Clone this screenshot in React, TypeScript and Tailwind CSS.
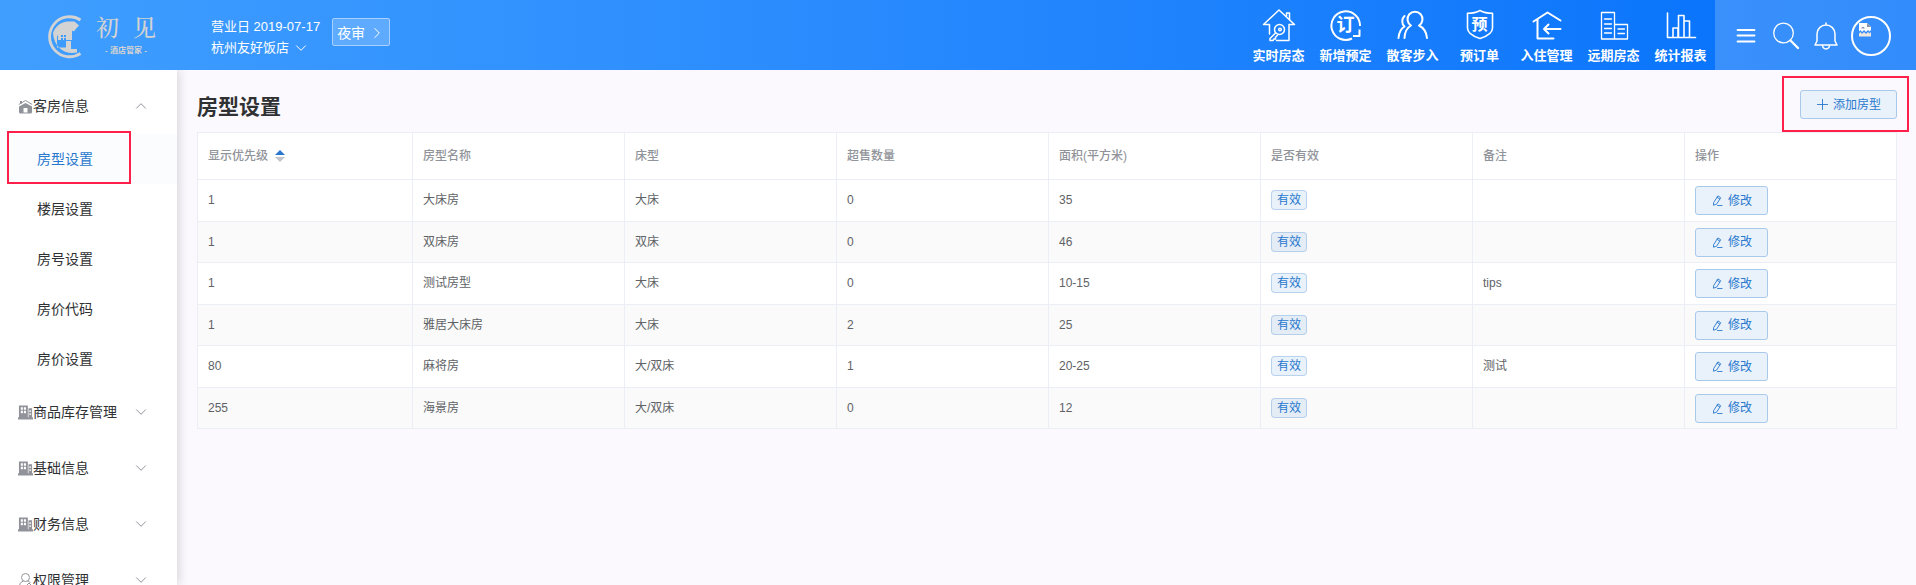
import type { ReactNode } from 'react';

type Room = { order: string; name: string; bed: string; oversell: string; area: string; note: string };

const rooms: Room[] = [
  { order: '1', name: '大床房', bed: '大床', oversell: '0', area: '35', note: '' },
  { order: '1', name: '双床房', bed: '双床', oversell: '0', area: '46', note: '' },
  { order: '1', name: '测试房型', bed: '大床', oversell: '0', area: '10-15', note: 'tips' },
  { order: '1', name: '雅居大床房', bed: '大床', oversell: '2', area: '25', note: '' },
  { order: '80', name: '麻将房', bed: '大/双床', oversell: '1', area: '20-25', note: '测试' },
  { order: '255', name: '海景房', bed: '大/双床', oversell: '0', area: '12', note: '' },
];

const stroke = {
  fill: 'none',
  stroke: 'currentColor',
  strokeLinecap: 'round' as const,
  strokeLinejoin: 'round' as const,
};

function Chevron({ className }: { className: string }) {
  return (
    <svg viewBox="0 0 12 12" className={className} {...stroke} strokeWidth="1">
      <path d="M1.500 3.800 6 8.300l4.500-4.500" />
    </svg>
  );
}

function RoomStatusIcon() {
  return (
    <svg viewBox="0 0 34 34" className="size-[34px]" {...stroke} strokeWidth="1.500">
      <path d="M7.500 26V16.500H1.500L17 2l15.500 14.500H27v16H14.500" />
      <path d="M24.500 8V5h3v6.500" />
      <circle cx="17.500" cy="21.500" r="5" />
      <circle cx="18" cy="21.500" r="1.300" />
      <path d="M13.500 25 8 30.500v2h3l1-1.500h1.500v-1.800l2-2" />
    </svg>
  );
}

function NewBookingIcon() {
  return (
    <span className="relative flex size-[34px] items-center justify-center">
      <svg viewBox="0 0 34 34" className="absolute inset-0 size-[34px]" {...stroke} strokeWidth="2" strokeLinecap="butt">
        <path d="M23 30.500A14.300 14.300 0 1 1 31 18" />
        <path d="M30.500 21.500v6.500H24" />
      </svg>
      <span className="text-[18px] leading-none font-bold">订</span>
    </span>
  );
}

function WalkInIcon() {
  return (
    <svg viewBox="0 0 34 34" className="size-[34px]" {...stroke} strokeWidth="2">
      <path d="M8.500 30c.3-6 2-10 6.500-12.500A7.500 7.500 0 1 1 23 17.500c5 2.500 7.500 6.500 8 12.500" />
      <path d="M8.500 8c-3 2.500-3 8 0 10.500C5 20.500 3 24 2.500 30" />
    </svg>
  );
}

function PreOrderIcon() {
  return (
    <span className="relative flex size-[34px] items-center justify-center">
      <svg viewBox="0 0 34 34" className="absolute inset-0 size-[34px]" {...stroke} strokeWidth="1.600">
        <path d="M17 2.500c4 2.300 8 2.800 12.500 2.800V20c0 5-6 8.500-12.500 10.500C10.500 28.500 4.500 25 4.500 20V5.300C9 5.300 13 4.800 17 2.500Z" />
      </svg>
      <span className="pb-px text-[16px] leading-none font-bold">预</span>
    </span>
  );
}

function CheckInIcon() {
  return (
    <svg viewBox="0 0 34 34" className="size-[34px]" {...stroke} strokeWidth="2">
      <path d="M3.500 13.500 17.500 4.500l13 8M7.500 11.500v19h16" />
      <path d="M30.500 21H14M18.500 16.500 14 21l4.500 4.500" />
    </svg>
  );
}

function ForwardIcon() {
  return (
    <svg viewBox="0 0 34 34" className="size-[34px]" {...stroke} strokeWidth="1.300">
      <path d="M17.500 31H4.500V4.500h13V31h13V16.500h-13" />
      <path d="M7.500 11h7M7.500 16h7M7.500 20.500h7M7.500 25h7M21 21h6.500M21 25.500h6.500" />
    </svg>
  );
}

function ReportIcon() {
  return (
    <svg viewBox="0 0 34 34" className="size-[34px]" {...stroke} strokeWidth="1.600">
      <path d="M3.500 5v24.500h28" />
      <path d="M9 29V20h5v9M14.500 29V7.500h5.500V29M20 13h5.500v16" />
    </svg>
  );
}

const navItems: { label: string; icon: ReactNode }[] = [
  { label: '实时房态', icon: <RoomStatusIcon /> },
  { label: '新增预定', icon: <NewBookingIcon /> },
  { label: '散客步入', icon: <WalkInIcon /> },
  { label: '预订单', icon: <PreOrderIcon /> },
  { label: '入住管理', icon: <CheckInIcon /> },
  { label: '远期房态', icon: <ForwardIcon /> },
  { label: '统计报表', icon: <ReportIcon /> },
];

function Logo() {
  return (
    <div className="flex items-center gap-[14px] pt-[3px] text-[#d3d3d3]">
      <svg viewBox="0 0 36 44" className="h-11 w-9" fill="none">
        <path d="M34.500 5A20 20 0 1 0 34.500 38.500" stroke="currentColor" strokeWidth="2.800" />
        <path
          fill="currentColor"
          d="M7 18C9.500 11 15 7 22 6.500h6.500l4.500 4-5.500 6-5-5L11 21v11.500h9V26h5v8h6v3.500C19 40 8 33 7 18Z"
        />
        <path fill="currentColor" d="m22.500 8 7 7.500H26V25H12v-8h-3Z" />
        <path fill="#3d9bff" d="M15 20h2v2h-2zM18 20h2v2h-2zM15 23h2v2h-2zM18 23h2v2h-2zM14 27h5v5h-5z" />
      </svg>
      <div className="flex flex-col items-center">
        <div className="flex gap-[14px] font-['Liberation_Serif','Noto_Serif_CJK_SC','Noto_Sans_CJK_SC',serif] text-[23px] leading-7 font-medium">
          <span>初</span>
          <span>见</span>
        </div>
        <div className="text-[8px] leading-4 font-bold">- 酒店管家 -</div>
      </div>
    </div>
  );
}

function Header() {
  return (
    <header className="relative z-20 flex h-[70px] shrink-0 bg-linear-to-r from-[#409eff] to-[#0070fb] text-white">
      <div className="flex w-[211px] shrink-0 items-center pl-[46px]">
        <Logo />
      </div>
      <div className="flex gap-3">
        <div className="pt-4 text-[13px] leading-[21px]">
          <div>营业日 2019-07-17</div>
          <button type="button" className="flex items-center gap-[6px]">
            杭州友好饭店
            <Chevron className="size-3" />
          </button>
        </div>
        <button
          type="button"
          className="mt-[18px] flex h-7 w-[58px] items-center justify-between rounded-xs border border-[#a6d0ff] bg-white/20 pt-[2px] pr-[6px] pl-1 text-[14px]"
        >
          夜审
          <Chevron className="size-3 -rotate-90" />
        </button>
      </div>
      <nav className="ml-auto flex pr-px">
        {navItems.map((item) => (
          <a key={item.label} href="#" className="flex w-[67px] flex-col items-center pt-2 text-[13px] leading-7 font-bold">
            {item.icon}
            {item.label}
          </a>
        ))}
      </nav>
      <div className="flex w-[201px] shrink-0 items-center bg-white/20 pt-[2px] pr-[25px] pl-[21px]">
        <button type="button" aria-label="菜单">
          <svg viewBox="0 0 20 20" className="size-5" {...stroke} strokeWidth="1.800">
            <path d="M1.500 4h17M1.500 9.500h17M1.500 15.500h17" />
          </svg>
        </button>
        <button type="button" aria-label="搜索" className="ml-4">
          <svg viewBox="0 0 28 28" className="size-7" {...stroke}>
            <circle cx="11.500" cy="11" r="9.800" strokeWidth="1.300" />
            <path d="m18.500 18.500 7.500 7.500" strokeWidth="2.400" />
          </svg>
        </button>
        <button type="button" aria-label="通知" className="ml-[13px]">
          <svg viewBox="0 0 26 28" className="h-7 w-[26px]" {...stroke} strokeWidth="1.500">
            <path d="M13 1v2M4 19v-7a9 9 0 0 1 18 0v7l2 4H2l2-4Z" />
            <path d="M9.500 23.500c.5 4.500 6.500 4.500 7 0" />
          </svg>
        </button>
        <button type="button" aria-label="用户" className="ml-auto flex size-10 rounded-full border-2 border-white pt-[5px] pl-[6px]">
          <svg viewBox="0 0 12 14" className="h-[14px] w-3">
            <path d="M0 0h8l4 4v3L10.500 8.500 9 7 7 9 5 7 3 9 1.500 7 0 8.500Z" fill="#fff" />
            <path d="M0 10.500 1.500 9 3 11l2-2 2 2 2-2 1.500 1.500L12 9v4.500H0Z" fill="#efe6dd" />
            <path d="M2 5.500C3 3.500 5 3.500 6 5.500ZM8 0v4h4Z" fill="#8a93a3" />
          </svg>
        </button>
      </div>
    </header>
  );
}

function HouseIcon() {
  return (
    <svg viewBox="0 0 15 15" className="size-[15px]" fill="#909399">
      <path
        fillRule="evenodd"
        d="M1 7.500 7.500 4 14 7.500V13q0 1.500-1.500 1.500h-10Q1 14.500 1 13ZM5.500 9v4.500h4V9Z"
      />
      <path d="M.8 5.500 7.500 1.500l6.700 4" fill="none" stroke="#909399" strokeWidth="1" />
      <path d="M2 2h2v2.500H2z" />
    </svg>
  );
}

function BuildingIcon() {
  return (
    <svg viewBox="0 0 16 16" className="h-4 w-[15px]" fill="#909399">
      <path
        fillRule="evenodd"
        d="M1 1h9.500v12.500h.7V4H15v9.500h1V16H0v-2.500h1ZM3 3v2.500h2.200V3Zm3.300 0v2.500h2.200V3ZM3 6.700v2.500h2.200V6.700Zm3.300 0v2.500h2.200V6.700ZM12 6.500v1.300h2V6.500Zm0 3v1.300h2V9.500Z"
      />
    </svg>
  );
}

function PersonIcon() {
  return (
    <svg viewBox="0 0 15 16" className="h-4 w-[15px]" fill="none" stroke="#909399" strokeWidth="1">
      <circle cx="7.500" cy="5.500" r="4" />
      <path d="M5.500 9C2.500 10 1.500 12 1.500 15h4M9.500 9c1.500.5 2.500 1.200 3 2" />
      <path d="m8 14 3-3 2.500 2.500-2 2" />
    </svg>
  );
}

const roomLinks = ['房型设置', '楼层设置', '房号设置', '房价代码', '房价设置'];

const groups: { label: string; icon: ReactNode }[] = [
  { label: '商品库存管理', icon: <BuildingIcon /> },
  { label: '基础信息', icon: <BuildingIcon /> },
  { label: '财务信息', icon: <BuildingIcon /> },
  { label: '权限管理', icon: <PersonIcon /> },
];

function GroupButton({ label, icon, open = false }: { label: string; icon: ReactNode; open?: boolean }) {
  return (
    <button type="button" aria-expanded={open} className="flex h-14 w-full items-center pr-[30px] pl-[18px]">
      {icon}
      {label}
      <Chevron className={open ? 'ml-auto size-3 rotate-180 text-[#909399]' : 'ml-auto size-3 text-[#909399]'} />
    </button>
  );
}

function Highlight({ className }: { className: string }) {
  return <div className={`pointer-events-none absolute border-2 border-[#ff1f4b] ${className}`} />;
}

function Sidebar() {
  return (
    <aside className="relative z-10 w-[177px] shrink-0 bg-white text-[14px] text-[#303133] shadow-[2px_0_10px_rgba(0,0,0,0.15)]">
      <nav className="pt-2">
        <GroupButton label="客房信息" icon={<HouseIcon />} open />
        <ul>
          {roomLinks.map((label, i) => (
            <li key={label} className="relative">
              <a
                href="#"
                className={
                  i === 0
                    ? 'flex h-[50px] items-center bg-[#fafcfe] pl-[37px] text-[#2878ce]'
                    : 'flex h-[50px] items-center pl-[37px]'
                }
              >
                {label}
              </a>
              {i === 0 && <Highlight className="-top-[3px] right-[46px] bottom-0 left-[7px]" />}
            </li>
          ))}
        </ul>
        {groups.map((g) => (
          <GroupButton key={g.label} label={g.label} icon={g.icon} />
        ))}
      </nav>
    </aside>
  );
}

const buttonClass =
  'flex h-[29px] items-center gap-[5px] rounded-[3px] border border-[#a9c9eb] bg-[#e9f1fa] text-[12px] text-[#2878ce]';

function RoomTable() {
  const line = 'border-r border-b border-[#ebeef5] px-[10px] text-left';
  const cell = `${line} pb-px`;
  return (
    <table className="w-full table-fixed border-separate border-spacing-0 border-t border-l border-[#ebeef5] bg-white text-[12px] text-[#606266]">
      <colgroup>
        <col className="w-[215px]" />
        <col span={7} />
      </colgroup>
      <thead>
        <tr className="h-[47px] text-[#909399]">
          <th className={`${line} font-medium`} aria-sort="ascending">
            <button type="button" className="flex items-center gap-[7px]">
              显示优先级
              <svg viewBox="0 0 10 12" className="h-3 w-[10px]">
                <path d="M5 0 10 5H0Z" fill="#2878ce" />
                <path d="M5 12 0 7h10Z" fill="#c0c4cc" />
              </svg>
            </button>
          </th>
          {['房型名称', '床型', '超售数量', '面积(平方米)', '是否有效', '备注', '操作'].map((h) => (
            <th key={h} className={`${line} font-medium`}>
              {h}
            </th>
          ))}
        </tr>
      </thead>
      <tbody>
        {rooms.map((r) => (
          <tr key={r.name} className="odd:h-[42px] even:h-[41px] even:bg-[#fafafa]">
            <td className={cell}>{r.order}</td>
            <td className={cell}>{r.name}</td>
            <td className={cell}>{r.bed}</td>
            <td className={cell}>{r.oversell}</td>
            <td className={cell}>{r.area}</td>
            <td className={cell}>
              <span className="flex h-5 w-9 items-center justify-center rounded-sm border border-[#2878ce]/25 bg-[#2878ce]/10 text-[#2878ce]">
                有效
              </span>
            </td>
            <td className={cell}>{r.note}</td>
            <td className={line}>
              <button type="button" className={`${buttonClass} w-[73px] pl-4`}>
                <svg viewBox="0 0 12 12" className="size-[11px]" {...stroke} strokeWidth="1">
                  <path d="M2 8 6.500 1l3 2L5 10l-3 1ZM5.500 2.500l3 2M6 11.500h5" />
                </svg>
                修改
              </button>
            </td>
          </tr>
        ))}
      </tbody>
    </table>
  );
}

export default function App() {
  return (
    <div className="flex h-screen flex-col overflow-hidden bg-[#fbf9fe] font-['Liberation_Sans','Noto_Sans_CJK_SC',sans-serif]">
      <Header />
      <div className="flex min-h-0 flex-1">
        <Sidebar />
        <main className="min-w-0 flex-1 pt-5 pr-[19px] pl-5">
          <div className="flex items-start justify-between pb-3">
            <h1 className="pt-[3px] text-[21px] leading-[27px] font-bold text-[#303133]">房型设置</h1>
            <div className="relative">
              <button type="button" className={`${buttonClass} w-[97px] pl-4`}>
                <svg viewBox="0 0 12 12" className="size-[11px]" {...stroke} strokeWidth="1">
                  <path d="M6 .5v11M.5 6h11" />
                </svg>
                添加房型
              </button>
              <Highlight className="-top-[14px] -right-3 -bottom-[13px] -left-[18px]" />
            </div>
          </div>
          <RoomTable />
        </main>
      </div>
    </div>
  );
}
